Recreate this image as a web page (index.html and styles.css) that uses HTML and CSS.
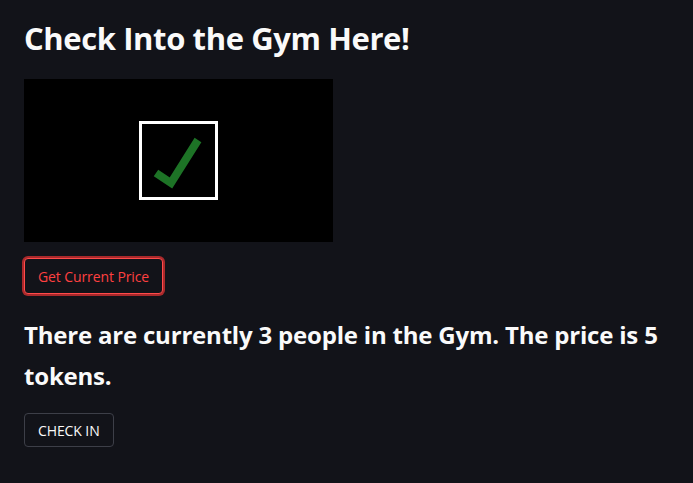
FILE: index.html
```html
<!DOCTYPE html>
<html>
<head>
<meta charset="utf-8">
<link rel="stylesheet" href="styles.css">
</head>
<body>
<main class="page">
  <h1 class="title">Check Into the Gym Here!</h1>
  <div class="scanner">
    <svg class="check" width="79" height="79" viewBox="0 0 79 79">
      <rect x="1.5" y="1.5" width="76" height="76" fill="none" stroke="#fff" stroke-width="3"/>
      <polyline points="17,52 32,62 59,19" fill="none" stroke="#1d7326" stroke-width="8" stroke-linejoin="miter"/>
    </svg>
  </div>
  <button class="btn btn-price">Get Current Price</button>
  <p class="status">There are currently 3 people in the Gym. The price is 5 tokens.</p>
  <button class="btn btn-check">CHECK IN</button>
</main>
</body>
</html>
```
FILE: styles.css
```css
html, body {
  margin: 0;
  padding: 0;
  background: #121319;
  color: #fafafa;
  font-family: "Open Sans", "Noto Sans", sans-serif;
}
.page {
  padding: 14px 24px;
  display: flex;
  flex-direction: column;
  align-items: flex-start;
}
.title {
  margin: 0;
  font-size: 31px;
  font-weight: 700;
  line-height: 48px;
  letter-spacing: -0.4px;
}
.scanner {
  margin-top: 17px;
  width: 309px;
  height: 163px;
  background: #000;
  display: flex;
  align-items: center;
  justify-content: center;
}
.check { display: block; }
.btn {
  font-family: inherit;
  font-size: 14px;
  border-radius: 4px;
  cursor: pointer;
  letter-spacing: -0.1px;
}
.btn-price {
  margin-top: 16px;
  height: 36px;
  padding: 0 13px;
  background: #121319;
  color: #ff4040;
  border: 1px solid #ff4b4b;
  box-shadow: 0 0 0 2px rgba(220, 50, 50, 0.75);
}
.status {
  margin: 20px 0 0;
  font-size: 24px;
  font-weight: 700;
  line-height: 41px;
  letter-spacing: -0.2px;
  max-width: 645px;
}
.btn-check {
  margin-top: 17px;
  height: 34px;
  padding: 0 13px;
  background: #121319;
  color: #fafafa;
  border: 1px solid #3d3f48;
}
```
